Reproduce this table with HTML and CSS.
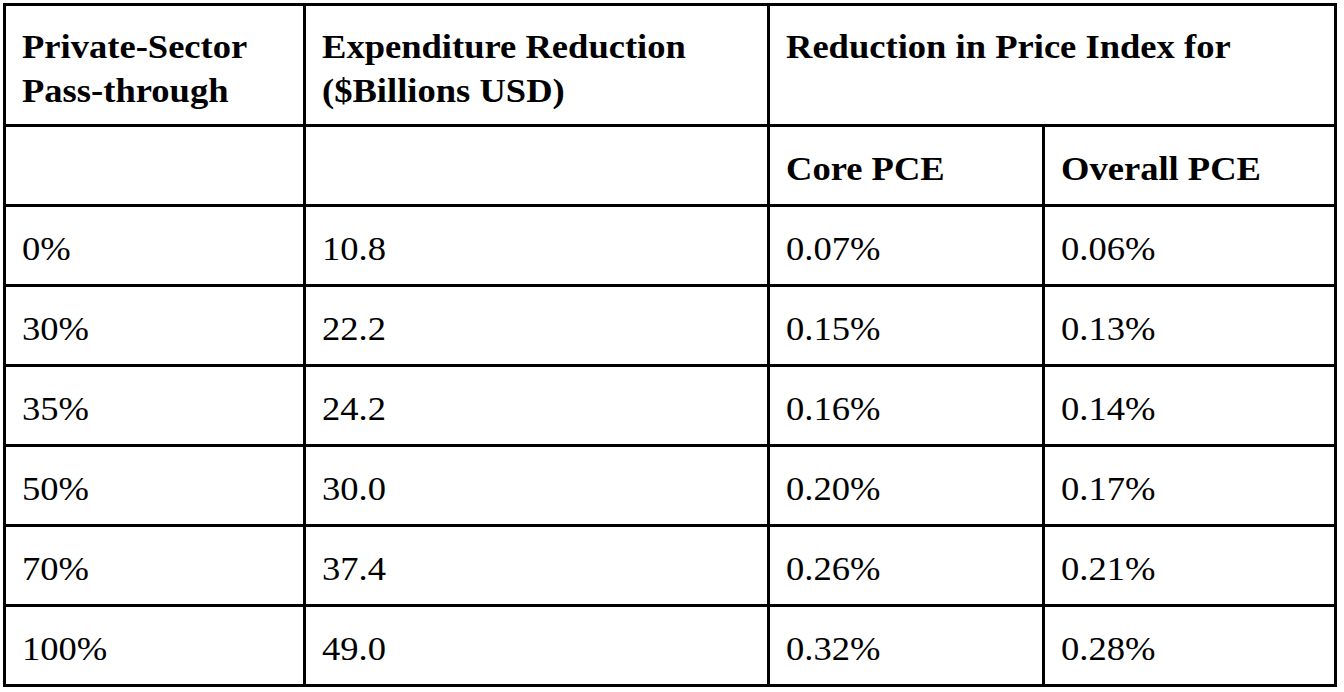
FILE: index.html
```html
<!DOCTYPE html>
<html lang="en">
<head>
<meta charset="utf-8">
<title>Pass-through table</title>
<link rel="stylesheet" href="styles.css">
</head>
<body>
<table class="grid">
  <colgroup>
    <col class="c1">
    <col class="c2">
    <col class="c3">
    <col class="c4">
  </colgroup>
  <tr class="head">
    <th><span class="t">Private-Sector<br>Pass-through</span></th>
    <th><span class="t">Expenditure Reduction<br>($Billions USD)</span></th>
    <th colspan="2"><span class="t">Reduction in Price Index for</span></th>
  </tr>
  <tr class="row">
    <th></th>
    <th></th>
    <th><span class="t">Core PCE</span></th>
    <th><span class="t">Overall PCE</span></th>
  </tr>
  <tr class="row"><td><span class="t">0%</span></td><td><span class="t">10.8</span></td><td><span class="t">0.07%</span></td><td><span class="t">0.06%</span></td></tr>
  <tr class="row"><td><span class="t">30%</span></td><td><span class="t">22.2</span></td><td><span class="t">0.15%</span></td><td><span class="t">0.13%</span></td></tr>
  <tr class="row"><td><span class="t">35%</span></td><td><span class="t">24.2</span></td><td><span class="t">0.16%</span></td><td><span class="t">0.14%</span></td></tr>
  <tr class="row"><td><span class="t">50%</span></td><td><span class="t">30.0</span></td><td><span class="t">0.20%</span></td><td><span class="t">0.17%</span></td></tr>
  <tr class="row"><td><span class="t">70%</span></td><td><span class="t">37.4</span></td><td><span class="t">0.26%</span></td><td><span class="t">0.21%</span></td></tr>
  <tr class="row"><td><span class="t">100%</span></td><td><span class="t">49.0</span></td><td><span class="t">0.32%</span></td><td><span class="t">0.28%</span></td></tr>
</table>
</body>
</html>
```
FILE: styles.css
```css
html, body {
  margin: 0;
  padding: 0;
  background: #ffffff;
}

body {
  font-family: "Liberation Serif", "Times New Roman", serif;
  color: #000000;
}

.grid {
  margin: 3px 0 0 3px;
  width: 1334px;
  table-layout: fixed;
  border-collapse: separate;
  border-spacing: 3px;
  background: #000000;
}

.c1 { width: 297px; }
.c2 { width: 461px; }
.c3 { width: 272px; }
.c4 { width: 289px; }

.grid th,
.grid td {
  background: #ffffff;
  padding: 20px 0 0 16px;
  vertical-align: top;
  text-align: left;
  font-size: 34px;
  line-height: 44px;
  white-space: nowrap;
}

.grid th {
  font-weight: bold;
}

.grid td {
  font-weight: normal;
}

.head {
  height: 118px;
}

.head th {
  padding-top: 19px;
}

.row {
  height: 77px;
}

.t {
  display: inline-block;
  transform-origin: 0 0;
  transform: scaleX(1.075);
}
```
